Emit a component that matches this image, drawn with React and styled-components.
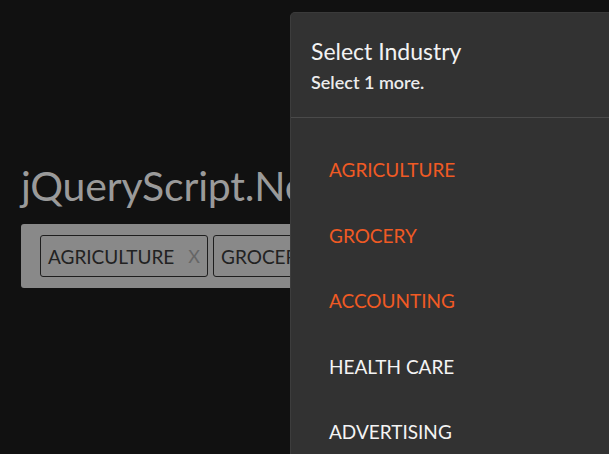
import React from 'react'
import styled, { createGlobalStyle } from 'styled-components'

const GlobalStyle = createGlobalStyle`
  html, body {
    margin: 0;
    padding: 0;
    background: #111111;
    overflow: hidden;
  }
  body {
    font-family: Lato, "Open Sans", sans-serif;
    width: 609px;
    height: 454px;
    position: relative;
  }
`

const Page = styled.div`
  padding: 158px 0 0 21px;
`

const Title = styled.h1`
  margin: 0 0 10px 0;
  font-size: 41px;
  font-weight: 400;
  color: #9a9a9a;
  letter-spacing: -0.2px;
  white-space: nowrap;
  line-height: 56px;
`

const TagBox = styled.div`
  display: flex;
  gap: 5px;
  width: 520px;
  padding: 11px 19px 11px 19px;
  background: #898989;
  border-radius: 3px;
`

const Tag = styled.div`
  display: flex;
  align-items: center;
  gap: 14px;
  height: 40px;
  padding: 0 7px;
  border: 1px solid #1e1e1e;
  border-radius: 3px;
  font-size: 19px;
  color: #222;
  white-space: nowrap;
`

const Remove = styled.span`
  color: #666;
  font-size: 18px;
`

const Drawer = styled.aside`
  position: absolute;
  top: 12px;
  left: 290px;
  width: 360px;
  height: 460px;
  background: #323232;
  border-left: 1px solid #3d3d3d;
  border-top: 1px solid #3a3a3a;
  border-top-left-radius: 5px;
`

const Header = styled.div`
  padding: 22px 20px 22px 20px;
  border-bottom: 1px solid #4a4a4a;
`

const HeaderTitle = styled.div`
  font-size: 23px;
  color: #f2f2f2;
  line-height: 32px;
`

const HeaderSub = styled.div`
  margin-top: 2px;
  font-size: 18px;
  font-weight: 600;
  color: #ececec;
  line-height: 26px;
`

const List = styled.ul`
  list-style: none;
  margin: 0;
  padding: 19px 0 0 38px;
`

const Item = styled.li`
  height: 65.5px;
  line-height: 65.5px;
  font-size: 19px;
  color: ${props => (props.selected ? '#f05a24' : '#f4f4f4')};
`

const items = [
  { name: 'AGRICULTURE', selected: true },
  { name: 'GROCERY', selected: true },
  { name: 'ACCOUNTING', selected: true },
  { name: 'HEALTH CARE', selected: false },
  { name: 'ADVERTISING', selected: false }
]

const App = () => (
  <>
    <GlobalStyle />
    <Page>
      <Title>jQueryScript.Net</Title>
      <TagBox>
        <Tag>
          AGRICULTURE <Remove>X</Remove>
        </Tag>
        <Tag>
          GROCERY <Remove>X</Remove>
        </Tag>
      </TagBox>
    </Page>
    <Drawer>
      <Header>
        <HeaderTitle>Select Industry</HeaderTitle>
        <HeaderSub>Select 1 more.</HeaderSub>
      </Header>
      <List>
        {items.map(item => (
          <Item key={item.name} selected={item.selected}>
            {item.name}
          </Item>
        ))}
      </List>
    </Drawer>
  </>
)

export default App
